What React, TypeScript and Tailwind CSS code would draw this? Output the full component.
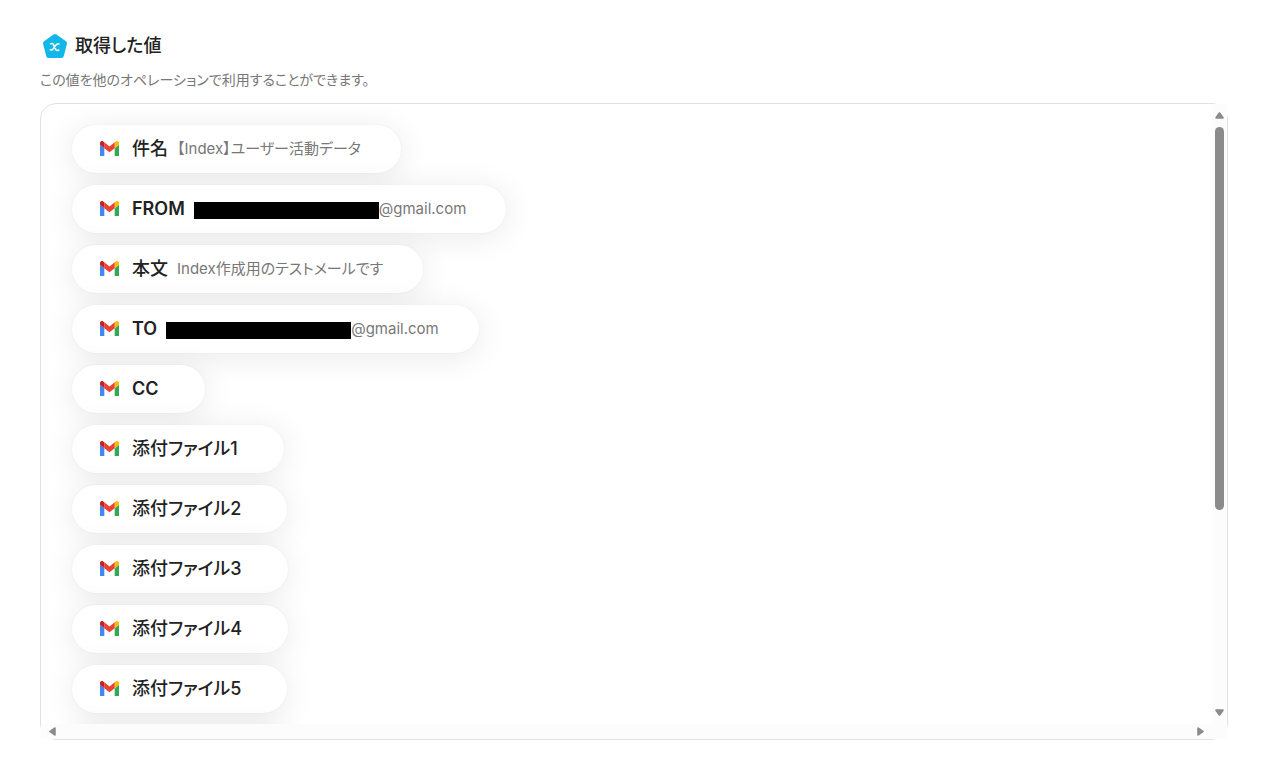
import React from "react";

type Item = { label: string; latin?: boolean; value?: string; redacted?: boolean };

const items: Item[] = [
  { label: "件名", value: "【Index】ユーザー活動データ" },
  { label: "FROM", latin: true, value: "@gmail.com", redacted: true },
  { label: "本文", value: "Index作成用のテストメールです" },
  { label: "TO", latin: true, value: "@gmail.com", redacted: true },
  { label: "CC", latin: true },
  { label: "添付ファイル1" },
  { label: "添付ファイル2" },
  { label: "添付ファイル3" },
  { label: "添付ファイル4" },
  { label: "添付ファイル5" },
];

const pillClass =
  "flex h-12 shrink-0 items-center rounded-full bg-white shadow-[0_0_2px_rgba(0,0,0,0.06),0_4px_32px_rgba(0,0,0,0.09)]";

function GmailIcon() {
  return (
    <svg viewBox="52 42 88 66" className="mb-px h-[15px] w-[19px] shrink-0" preserveAspectRatio="none" aria-hidden="true">
      <path fill="#4285f4" d="M52 108h20V74L52 59Z" />
      <path fill="#34a853" d="M120 108h20V59l-20 15" />
      <path fill="#fbbc04" d="M120 48v26l20-15v-8c0-7.42-8.47-11.65-14.4-7.2" />
      <path fill="#ea4335" d="M72 74V48l24 18 24-18v26L96 92" />
      <path fill="#c5221f" d="M52 51v8l20 15V48l-5.6-4.2c-5.94-4.45-14.4-.22-14.4 7.2" />
    </svg>
  );
}

function ValueIcon() {
  return (
    <svg viewBox="0 0 26 26" className="size-[26px] shrink-0" aria-hidden="true">
      <path
        d="M13 3.5 22.5 10.3 19.3 22.500H6.7L3.5 10.3Z"
        fill="#12b7ea"
        stroke="#12b7ea"
        strokeWidth="5"
        strokeLinejoin="round"
      />
      <path
        d="M8.600 10.800c1.300-.7 2.200-.4 2.800.9l2.300 4.700c.6 1.200 1.600 1.400 3.100.6M17 10.900c-1.200-.6-2.100-.1-3 1.100l-2.800 3.800c-.8 1.100-1.800 1.500-3 .9"
        fill="none"
        stroke="#fff"
        strokeWidth="1.5"
        strokeLinecap="round"
      />
    </svg>
  );
}

function Arrow({ className }: { className: string }) {
  return (
    <svg viewBox="0 0 9 7" className={`h-[7px] w-[9px] shrink-0 ${className}`} aria-hidden="true">
      <path d="M4.5 1.2 7.8 5.8H1.2Z" fill="#8b8b8b" stroke="#8b8b8b" strokeWidth="2" strokeLinejoin="round" />
    </svg>
  );
}

function Pill({ label, latin, value, redacted }: Item) {
  return (
    <li className={`${pillClass} pl-7 ${value ? "pr-10" : "pr-[37px]"}`}>
      <GmailIcon />
      <span className={`ml-[13px] text-lg text-[#222] ${latin ? "font-semibold" : "font-medium"}`}>{label}</span>
      <span className="ml-[9px] flex items-center text-[15px] text-[#777]">
        {redacted && <span className="mt-[3px] h-[17px] w-[185px] bg-black" />}
        {value}
      </span>
    </li>
  );
}

export default function App() {
  return (
    <main className="flex h-screen flex-col bg-white px-10 py-[30px] font-['Inter','Noto_Sans_CJK_JP',sans-serif] [font-feature-settings:'palt']">
      <header>
        <h1 className="flex h-8 items-center gap-[7px] pl-[2px] text-lg font-medium text-[#222]">
          <ValueIcon />
          取得した値
        </h1>
        <p className="mt-2 text-sm text-[#777]">
          この値を他のオペレーションで利用することができます。
        </p>
      </header>
      <section className="mt-[13px] mr-[-2px] grid min-h-0 flex-1 grid-cols-[minmax(0,1fr)_15px] grid-rows-[minmax(0,1fr)_15px] rounded-2xl border border-[#e2e2e2]">
        <ul className="flex flex-col items-start gap-3 overflow-hidden rounded-tl-2xl px-[31px] pt-[21px]">
          {items.map((item) => (
            <Pill key={item.label} {...item} />
          ))}
          <li className={`${pillClass} w-[215px]`} aria-hidden="true" />
        </ul>
        <div className="flex flex-col items-center bg-[#fcfcfc] py-2" aria-hidden="true">
          <Arrow className="" />
          <div className="mt-2 w-[9px] basis-[383px] rounded-full bg-[#8b8b8b]" />
          <Arrow className="mt-auto rotate-180" />
        </div>
        <div className="flex items-center justify-between bg-[#fcfcfc] px-[7px]" aria-hidden="true">
          <Arrow className="-rotate-90" />
          <Arrow className="rotate-90" />
        </div>
        <div className="bg-[#fcfcfc]" />
      </section>
    </main>
  );
}
